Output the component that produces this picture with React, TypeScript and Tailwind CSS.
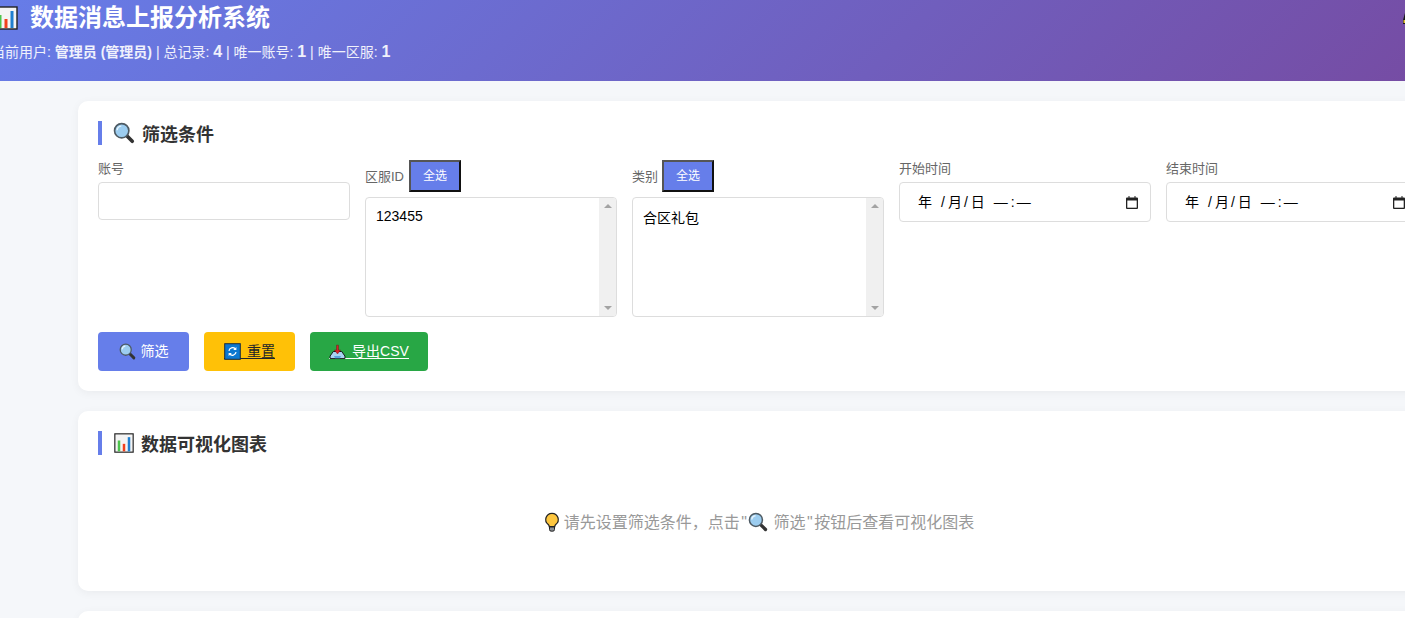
import React from "react";

const cjk = "font-['Liberation_Sans','Noto_Sans_CJK_SC',sans-serif]";

function ChartIcon({ size }: { size: number }) {
  return (
    <svg width={size} height={size} viewBox="0 0 24 24" className="inline-block shrink-0">
      <rect x="1" y="1" width="22" height="22" fill="#f4f4f4" stroke="#222" strokeWidth="1.4" />
      <rect x="4.5" y="9" width="3" height="13" fill="#4cc44c" />
      <rect x="10.5" y="13" width="3" height="9" fill="#f0401c" />
      <rect x="16.5" y="5" width="3" height="17" fill="#1f7fd0" />
    </svg>
  );
}

function SearchIcon({ size }: { size: number }) {
  return (
    <svg width={size} height={size} viewBox="0 0 24 24" className="inline-block shrink-0">
      <path d="M14.5 14.5 L21 21" stroke="#333" strokeWidth="4" strokeLinecap="round" />
      <circle cx="9.5" cy="9.5" r="7.8" fill="#9ccdf0" stroke="#4d5a63" strokeWidth="1.8" />
      <path d="M4.5 9a5 5 0 0 1 4.5-4.5" stroke="#e6f4fc" strokeWidth="1.6" fill="none" />
    </svg>
  );
}

function Bulb({ size }: { size: number }) {
  return (
    <svg width={size} height={size} viewBox="0 0 24 24" className="inline-block shrink-0">
      <path d="M12 1.5a7.5 7.5 0 0 0-4.5 13.5c.8.7 1.2 1.5 1.2 2.5h6.6c0-1 .4-1.8 1.2-2.5A7.5 7.5 0 0 0 12 1.5z" fill="#fdc63f" stroke="#222" strokeWidth="1.5" />
      <path d="M9 18h6v3a2 2 0 0 1-2 2h-2a2 2 0 0 1-2-2z" fill="#8a8f94" stroke="#222" strokeWidth="1.2" />
    </svg>
  );
}

function Refresh({ size }: { size: number }) {
  return (
    <svg width={size} height={size} viewBox="0 0 24 24" className="inline-block shrink-0">
      <rect x="1" y="1" width="22" height="22" fill="#0d78d0" stroke="#1b2a3a" strokeWidth="1.4" />
      <path d="M7 11a5.2 5.2 0 0 1 9-2.6" stroke="#fff" strokeWidth="1.8" fill="none" />
      <path d="M17 13a5.2 5.2 0 0 1-9 2.6" stroke="#fff" strokeWidth="1.8" fill="none" />
      <path d="M17.5 5.5v4.5h-4.5z" fill="#fff" />
      <path d="M6.5 18.5v-4.5h4.5z" fill="#fff" />
    </svg>
  );
}

function Inbox({ size }: { size: number }) {
  return (
    <svg width={size} height={size} viewBox="0 0 24 24" className="inline-block shrink-0">
      <path d="M6 12 L1.5 18.5 V22 H22.5 V18.5 L18 12z" fill="#a9d4f2" stroke="#1a1a1a" strokeWidth="1.4" />
      <path d="M7 18.5h10l-1.5 3h-7z" fill="#5aa5dc" />
      <path d="M10.6 3h2.8v7h3L12 15.500 7.600 10h3z" fill="#d8222a" stroke="#6a1015" strokeWidth=".6" />
    </svg>
  );
}

function Calendar() {
  return (
    <svg width="12" height="13" viewBox="0 0 12 13" className="shrink-0">
      <path d="M2.500 0h1v1.500h5V0h1v1.500H11a1 1 0 0 1 1 1V12a1 1 0 0 1-1 1H1a1 1 0 0 1-1-1V2.500a1 1 0 0 1 1-1h1.500z" fill="#222" />
      <rect x="1.300" y="4.500" width="9.400" height="7.200" fill="#fff" />
    </svg>
  );
}

function Label({ children }: { children: React.ReactNode }) {
  return <span className="text-[13px] leading-[17px] text-[#666]">{children}</span>;
}

function SelectAll({ wide }: { wide?: boolean }) {
  return (
    <span className={`${wide ? "ml-[5px]" : "ml-1"} inline-flex h-8 w-[52px] items-center justify-center border-2 border-t-[#555] border-l-[#555] border-r-[#111] border-b-[#111] bg-[#667eea] text-xs text-white`}>
      全选
    </span>
  );
}

function ListBox({ children }: { children: React.ReactNode }) {
  return (
    <div className="mt-[5px] flex h-[120px] overflow-hidden rounded border border-[#ddd] bg-white">
      <div className="flex-1 px-[10px] pt-[10px] text-[14px] leading-[20px] text-black">{children}</div>
      <div className="flex w-[17px] flex-col items-center justify-between bg-[#f0f0f0] py-[6px]">
        <span className="h-0 w-0 border-x-4 border-b-[4px] border-x-transparent border-b-[#a3a3a3]" />
        <span className="h-0 w-0 border-x-4 border-t-[4px] border-x-transparent border-t-[#a3a3a3]" />
      </div>
    </div>
  );
}

function DateField({ label }: { label: string }) {
  return (
    <div className="flex flex-col">
      <Label>{label}</Label>
      <div className="mt-[5px] flex h-10 items-center justify-between rounded border border-[#ddd] bg-white pl-[18px] pr-[12px] text-[14px] text-black">
        <span className="flex items-center">
          <span>年</span>
          <span className="ml-[9px]">/</span>
          <span className="ml-[3px]">月</span>
          <span className="ml-[2px]">/</span>
          <span className="ml-[3px]">日</span>
          <span className="ml-[9px]">—</span>
          <span className="ml-[3px]">:</span>
          <span className="ml-[2px]">—</span>
        </span>
        <Calendar />
      </div>
    </div>
  );
}

function SectionTitle({ icon, gap, children }: { icon: React.ReactNode; gap: string; children: React.ReactNode }) {
  return (
    <h2 className={`flex h-6 items-center ${gap} border-l-4 border-[#667eea] pl-[11px] text-[18px] font-bold leading-6 text-[#333]`}>
      {icon}
      <span className="pt-[3px]">{children}</span>
    </h2>
  );
}

export default function App() {
  return (
    <div className={`h-[618px] w-[1405px] overflow-hidden bg-[#f5f7fa] ${cjk}`}>
      <header className="-ml-[36px] -mt-[8px] flex h-[89px] w-[1484px] justify-between bg-[linear-gradient(135deg,#667eea,#764ba2)] pl-[30px] pr-[25px] pt-[11px] text-white">
        <div>
          <h1 className="flex h-[30px] items-center gap-[12px] text-[24px] font-bold leading-[30px]">
            <ChartIcon size={24} />
            <span>数据消息上报分析系统</span>
          </h1>
          <p className="-ml-[3px] mt-[9px] text-[14px] leading-[20px] text-white/90">
            当前用户: <b className="font-semibold">管理员 (管理员)</b> | 总记录: <b className="text-[16px]">4</b> | 唯一账号: <b className="text-[16px]">1</b> | 唯一区服: <b className="text-[16px]">1</b>
          </p>
        </div>
        <svg width="20" height="20" viewBox="0 0 20 20" className="mt-[10px] shrink-0">
          <path d="M2 0 L0 7 V11 H2z" fill="#1a1a1a" />
          <rect x="0.500" y="7" width="1.500" height="3" fill="#e8c33a" />
        </svg>
      </header>

      <main className="ml-[78px] mt-5 flex w-[1360px] flex-col gap-5">
        <section className="h-[290px] rounded-[10px] bg-white p-5 shadow-[0_2px_10px_rgba(0,0,0,0.05)]">
          <SectionTitle icon={<SearchIcon size={22} />} gap="gap-[7px]">筛选条件</SectionTitle>
          <div className="mt-[15px] grid grid-cols-5 items-start gap-x-[15px]">
            <div className="flex flex-col">
              <Label>账号</Label>
              <div className="mt-[5px] h-[38px] rounded border border-[#ddd] bg-white" />
            </div>
            <div className="flex flex-col">
              <div className="flex items-center">
                <Label>区服ID</Label>
                <SelectAll wide />
              </div>
              <ListBox>
                <div className="-mt-[2px]">123455</div>
              </ListBox>
            </div>
            <div className="flex flex-col">
              <div className="flex items-center">
                <Label>类别</Label>
                <SelectAll />
              </div>
              <ListBox>合区礼包</ListBox>
            </div>
            <DateField label="开始时间" />
            <DateField label="结束时间" />
          </div>
          <div className="mt-[15px] flex gap-[15px] text-[14px]">
            <span className="flex h-[39px] w-[91px] items-center justify-center gap-[5px] rounded bg-[#667eea] text-white">
              <SearchIcon size={17} />
              筛选
            </span>
            <span className="flex h-[39px] w-[91px] items-center justify-center rounded bg-[#ffc107] text-[#212529]">
              <span className="flex h-[14px] items-center border-b border-current leading-[14px]">
                <Refresh size={17} />
                <span className="ml-[6px]">重置</span>
              </span>
            </span>
            <span className="flex h-[39px] w-[118px] items-center justify-center rounded bg-[#28a745] text-white">
              <span className="flex h-[14px] items-center border-b border-current leading-[14px]">
                <Inbox size={17} />
                <span className="ml-[6px]">导出CSV</span>
              </span>
            </span>
          </div>
        </section>

        <section className="h-[180px] rounded-[10px] bg-white p-5 shadow-[0_2px_10px_rgba(0,0,0,0.05)]">
          <SectionTitle icon={<span className="ml-px flex"><ChartIcon size={20} /></span>} gap="gap-[7px]">数据可视化图表</SectionTitle>
          <div className="mt-[54px] flex items-center justify-center text-[16px] leading-6 text-[#999]">
            <Bulb size={20} />
            <span className="ml-[2px] pt-[2px]">请先设置筛选条件，点击<span className="px-[1.5px]">"</span></span>
            <SearchIcon size={20} />
            <span className="ml-[5px] pt-[2px]">筛选<span className="px-[1.5px]">"</span>按钮后查看可视化图表</span>
          </div>
        </section>

        <section className="h-[180px] rounded-[10px] bg-white shadow-[0_2px_10px_rgba(0,0,0,0.05)]" />
      </main>
    </div>
  );
}
